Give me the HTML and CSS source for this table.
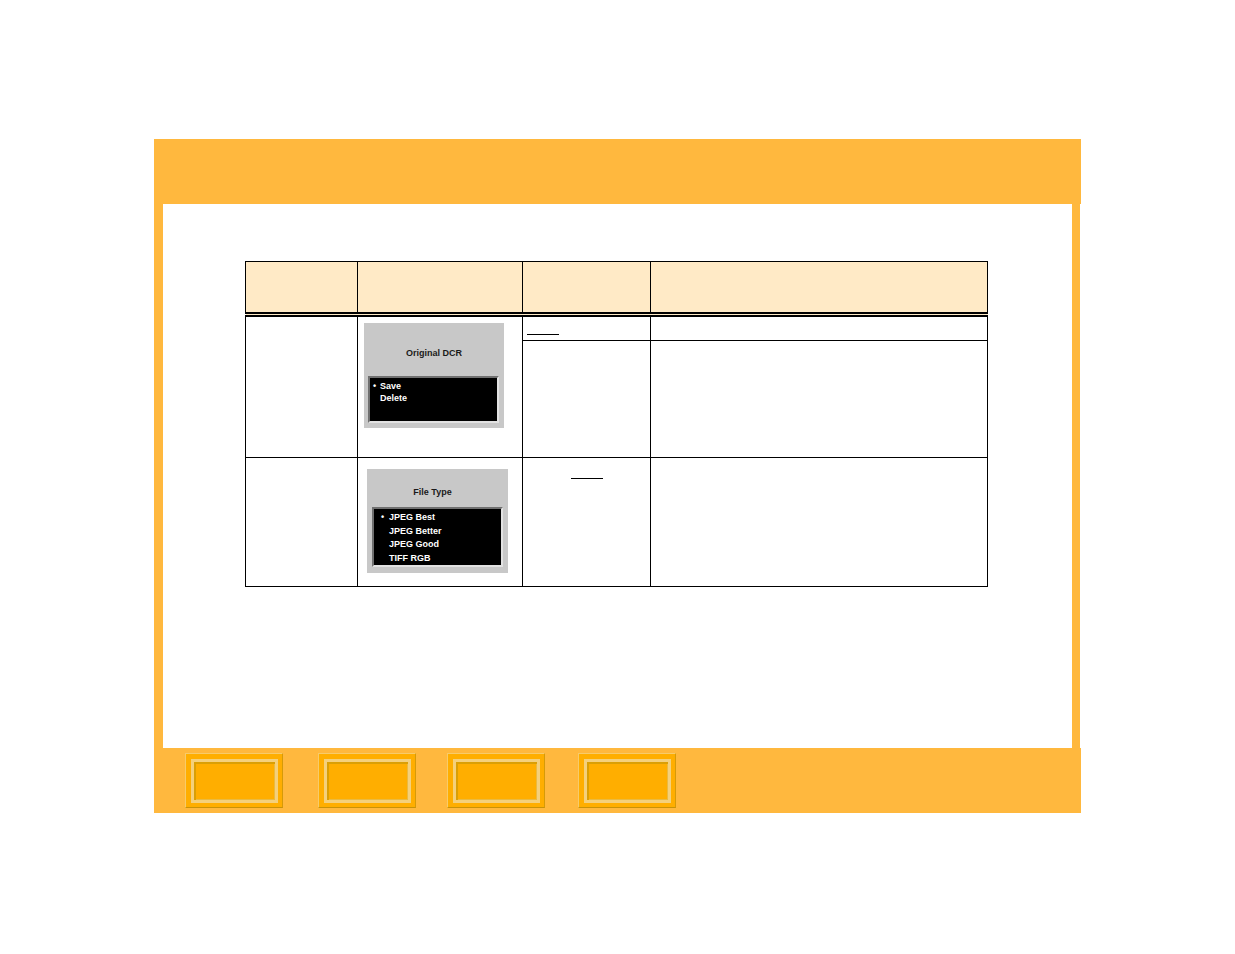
FILE: index.html
```html
<!DOCTYPE html>
<html lang="en">
<head>
<meta charset="utf-8">
<title>Menu settings</title>
<link rel="stylesheet" href="styles.css">
</head>
<body>
<div class="page">
  <div class="band band-top"></div>
  <div class="content">
    <table class="tbl">
      <colgroup>
        <col class="c1"><col class="c2"><col class="c3"><col class="c4">
      </colgroup>
      <thead>
        <tr class="head"><th></th><th></th><th></th><th></th></tr>
      </thead>
      <tbody>
        <tr class="r1a">
          <td rowspan="2"></td>
          <td rowspan="2" class="pic pic1">
            <div class="menu menu1">
              <div class="menu-title">Original DCR</div>
              <div class="menu-box">
                <div class="opt"><span class="dot">•</span>Save</div>
                <div class="opt"><span class="dot"></span>Delete</div>
              </div>
            </div>
          </td>
          <td class="val"><span class="link"></span></td>
          <td></td>
        </tr>
        <tr class="r1b"><td></td><td></td></tr>
        <tr class="r2">
          <td></td>
          <td class="pic pic2">
            <div class="menu menu2">
              <div class="menu-title">File Type</div>
              <div class="menu-box">
                <div class="opt"><span class="dot">•</span>JPEG Best</div>
                <div class="opt"><span class="dot"></span>JPEG Better</div>
                <div class="opt"><span class="dot"></span>JPEG Good</div>
                <div class="opt"><span class="dot"></span>TIFF RGB</div>
              </div>
            </div>
          </td>
          <td class="val center"><span class="link"></span></td>
          <td></td>
        </tr>
      </tbody>
    </table>
  </div>
  <div class="band band-bottom">
    <nav class="btns">
      <a class="btn"><span class="btn-in"></span></a>
      <a class="btn"><span class="btn-in"></span></a>
      <a class="btn"><span class="btn-in"></span></a>
      <a class="btn"><span class="btn-in"></span></a>
    </nav>
  </div>
</div>
</body>
</html>
```
FILE: styles.css
```css
html, body {
  margin: 0;
  padding: 0;
  background: #ffffff;
  font-family: "Liberation Sans", Arial, Helvetica, sans-serif;
}

.page {
  margin: 139px 0 0 154px;
  width: 927px;
}

.band {
  background: #FFB83E;
  height: 65px;
}

.content {
  box-sizing: border-box;
  height: 544px;
  margin-right: 1px;
  border-left: 9px solid #FFB83E;
  border-right: 8px solid #FFB83E;
  padding: 57px 0 0 82px;
}

/* table */
.tbl {
  border-collapse: collapse;
  table-layout: fixed;
  width: 742px;
}
.c1 { width: 112px; }
.c2 { width: 165px; }
.c3 { width: 128px; }
.c4 { width: 337px; }

.tbl th,
.tbl td {
  border: 1px solid #000;
  padding: 0;
  vertical-align: top;
}
.tbl th {
  background: #FFEAC6;
  border-bottom: 5px double #000;
}
.head { height: 53px; }
.r1a { height: 26px; }
.r1b { height: 117px; }
.r2 { height: 129px; }

.pic1 { padding: 6px 0 0 6px !important; }
.pic2 { padding: 11px 0 0 9px !important; }

.val {
  font-size: 0;
  line-height: 0;
  padding: 17px 0 0 4px !important;
}
.val.center { text-align: center; padding: 20px 0 0 0 !important; }
.link {
  display: inline-block;
  width: 32px;
  height: 0;
  border-bottom: 1px solid #000;
  vertical-align: top;
}

/* camera menu pictures */
.menu {
  background: #C8C8C8;
  box-sizing: border-box;
  font-size: 9px;
  font-weight: bold;
}
.menu1 { width: 140px; height: 105px; padding: 24px 0 0 4px; }
.menu2 { width: 141px; height: 104px; padding: 17px 0 0 5px; }

.menu-title {
  line-height: 12px;
  height: 12px;
  color: #1a1a1a;
  text-align: center;
  margin-left: -4px;
}
.menu2 .menu-title { margin-left: -15px; }

.menu-box {
  box-sizing: border-box;
  width: 131px;
  background: #000;
  color: #fff;
  border: 2px solid;
  border-color: #707070 #e2e2e2 #e2e2e2 #707070;
}
.menu1 .menu-box { margin-top: 17px; height: 47px; padding: 2px 0 0 3px; }
.menu2 .menu-box { margin-top: 9px; height: 60px; padding: 2px 0 0 7px; }

.opt { line-height: 12px; white-space: nowrap; }
.menu2 .opt { line-height: 13.7px; }
.dot { display: inline-block; width: 7px; }
.menu2 .dot { width: 8px; }

/* bottom navigation buttons */
.btns {
  display: flex;
  padding: 5px 0 0 31px;
}
.btn {
  display: block;
  box-sizing: border-box;
  width: 98px;
  height: 55px;
  margin-right: 33px;
  background: #FFAE00;
  border: 1px solid;
  border-color: #F7CB6A #D69A08 #C89208 #F7CB6A;
  padding: 5px 4px 4px 5px;
}
.btn:nth-child(2) { margin-left: 2px; margin-right: 31px; }
.btn-in {
  display: block;
  box-sizing: border-box;
  height: 100%;
  border: 3px solid #F4D07C;
  box-shadow: inset 2px 2px 0 #DA9F05, inset -1px -1px 0 #EABA40;
  background: #FFAE00;
}
```
